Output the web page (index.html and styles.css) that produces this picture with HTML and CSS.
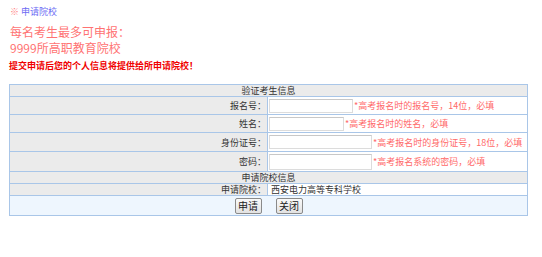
FILE: index.html
```html
<!DOCTYPE html>
<html lang="zh-CN">
<head>
<meta charset="utf-8">
<title>申请院校</title>
<link rel="stylesheet" href="styles.css">
</head>
<body>
<div class="page">
  <div class="crumb"><span class="mark">※</span> 申请院校</div>
  <div class="title">每名考生最多可申报：<br>9999所高职教育院校</div>
  <div class="warn">提交申请后您的个人信息将提供给所申请院校！</div>
  <table class="form">
    <colgroup><col class="c-label"><col class="c-field"></colgroup>
    <tr class="head"><td colspan="2">验证考生信息</td></tr>
    <tr class="row r1">
      <td class="label">报名号：</td>
      <td class="field"><input class="inp w84" type="text"><span class="hint">*高考报名时的报名号，14位，必填</span></td>
    </tr>
    <tr class="row r2">
      <td class="label">姓名：</td>
      <td class="field"><input class="inp w75" type="text"><span class="hint">*高考报名时的姓名，必填</span></td>
    </tr>
    <tr class="row r3">
      <td class="label">身份证号：</td>
      <td class="field"><input class="inp w103" type="text"><span class="hint">*高考报名时的身份证号，18位，必填</span></td>
    </tr>
    <tr class="row r4">
      <td class="label">密码：</td>
      <td class="field"><input class="inp w103 tall" type="password"><span class="hint">*高考报名系统的密码，必填</span></td>
    </tr>
    <tr class="head"><td colspan="2">申请院校信息</td></tr>
    <tr class="row small">
      <td class="label">申请院校：</td>
      <td class="field text">西安电力高等专科学校</td>
    </tr>
    <tr class="actions">
      <td colspan="2"><div class="btns"><button class="btn" type="button">申请</button><button class="btn" type="button">关闭</button></div></td>
    </tr>
  </table>
</div>
</body>
</html>
```

FILE: styles.css
```css
html, body {
  margin: 0;
  padding: 0;
  background: #ffffff;
}
body {
  font-family: "Noto Sans CJK SC", "Noto Sans", sans-serif;
  font-size: 9px;
  color: #333333;
}
.page {
  padding: 6px 0 0 9px;
}
.crumb {
  height: 12px;
  line-height: 12px;
  color: #6c6cf4;
  padding-left: 1px;
}
.crumb .mark {
  color: #ff8080;
}
.title {
  margin-top: 6px;
  font-size: 12px;
  line-height: 16px;
  color: #ff7373;
  padding-left: 1px;
}
.warn {
  margin-top: 4px;
  height: 12px;
  line-height: 12px;
  font-weight: bold;
  color: #f00000;
}
.form {
  margin-top: 12px;
  width: 519px;
  border-collapse: collapse;
  table-layout: fixed;
  border: 1px solid #a9c6e8;
}
.c-label { width: 258px; }
.form td {
  padding: 0;
  border: 1px solid #a9c6e8;
  line-height: 11px;
}
.head td {
  background: #ebebeb;
  text-align: center;
  height: 11px;
  color: #333333;
}
.label {
  background: #ebebeb;
  text-align: right;
  padding-right: 1px !important;
  color: #333333;
}
.field {
  background: #ffffff;
  padding-left: 1px !important;
  white-space: nowrap;
}
.r1 td, .r2 td { height: 17px; }
.r3 td { height: 18px; }
.r4 td { height: 19px; }
.small td { height: 11px; }
.field.text {
  padding-left: 3px !important;
}
.inp {
  box-sizing: border-box;
  height: 14px;
  margin: 0;
  padding: 0 2px;
  border: 1px solid #dcdcdc;
  border-top-color: #c8c8c8;
  background: #ffffff;
  vertical-align: middle;
  font-size: 9px;
}
.inp.tall { height: 16px; }
.w84 { width: 84px; }
.w75 { width: 75px; }
.w103 { width: 103px; }
.hint {
  color: #ff6a6a;
  vertical-align: middle;
  margin-left: 1px;
}
.actions td {
  background: #eef6fe;
  height: 19px;
}
.btns {
  display: flex;
  justify-content: center;
  gap: 14px;
}
.btn {
  box-sizing: border-box;
  height: 16px;
  width: 27px;
  padding: 0;
  font-family: "Noto Sans CJK SC", sans-serif;
  font-size: 10px;
  line-height: 14px;
  color: #222222;
  background: linear-gradient(#fafafa, #e2e2e2);
  border: 1px solid #8a8a8a;
  border-radius: 2px;
}
```
